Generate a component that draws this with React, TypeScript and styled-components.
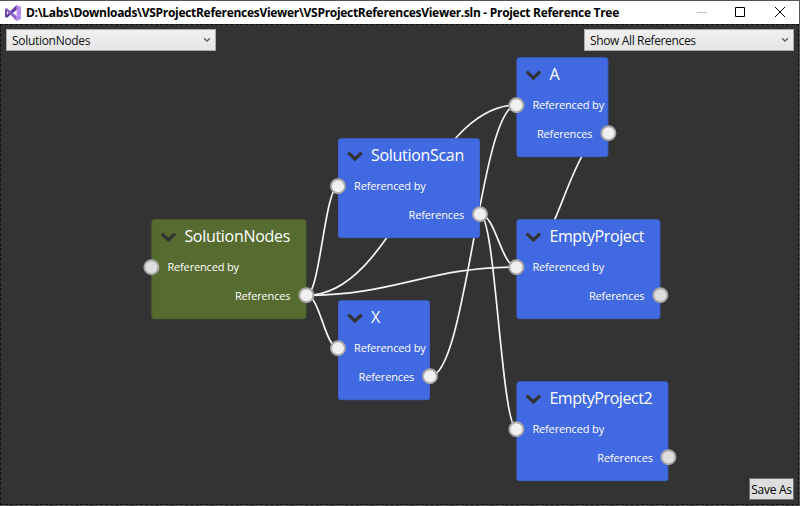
import React from 'react';
import styled, { createGlobalStyle } from 'styled-components';

const Global = createGlobalStyle`
  * { box-sizing: border-box; }
  body { margin: 0; background: #333; font-family: "Open Sans", "Noto Sans", sans-serif; }
`;

const Window = styled.div`
  width: 800px;
  height: 506px;
  display: flex;
  flex-direction: column;
  background: #333;
  border: 1px solid #555;
  border-left: 0;
  overflow: hidden;
`;

const TitleBar = styled.header`
  height: 23px;
  flex: none;
  display: flex;
  align-items: center;
  padding-left: 5px;
  background: #fff;
`;

const Title = styled.h1`
  flex: 1;
  margin: 0 0 0 5px;
  font-size: 12px;
  line-height: 22px;
  font-weight: 700;
  letter-spacing: -0.3px;
  color: #000;
  white-space: nowrap;
`;

const WindowButtons = styled.div`
  display: flex;
  width: 117px;
  height: 23px;
`;

const Client = styled.main`
  position: relative;
  flex: 1;
  display: flex;
  flex-direction: column;
  justify-content: space-between;
  border: 1px dashed #111;
  padding: 4px 4px 4px 5px;
`;

const Toolbar = styled.div`
  display: flex;
  justify-content: space-between;
`;

const Select = styled.button<{ $tracking: number }>`
  width: 210px;
  height: 22px;
  display: flex;
  align-items: center;
  justify-content: space-between;
  padding: 1px 4px 0 5px;
  border: 1px solid #acacac;
  background: linear-gradient(#f0f0f0, #e5e5e5);
  font: 12px/20px "Open Sans", sans-serif;
  letter-spacing: ${(p) => p.$tracking}px;
  color: #111;

  svg {
    margin-bottom: 2px;
  }
`;

const Footer = styled.div`
  position: relative;
  display: flex;
  justify-content: flex-end;
`;

const SaveButton = styled.button`
  width: 45px;
  height: 22px;
  padding: 1px 0 0;
  border: 1px solid #707070;
  background: #ddd;
  font: 12px/19px "Open Sans", sans-serif;
  letter-spacing: -0.3px;
  color: #000;
  white-space: nowrap;
`;

const Canvas = styled.div`
  position: absolute;
  left: -1px;
  top: -25px;
  width: 800px;
  height: 505px;
  pointer-events: none;
`;

const Wires = styled.svg`
  position: absolute;
  inset: 0;
  fill: none;
  stroke: #f5f5f5;
  stroke-width: 1.7;
`;

const NodeCard = styled.section<{ $x: number; $y: number; $w: number; $root?: boolean }>`
  position: absolute;
  left: ${(p) => Math.floor(p.$x)}px;
  top: ${(p) => p.$y}px;
  width: ${(p) => p.$w}px;
  height: 100px;
  transform: translate(${(p) => p.$x - Math.floor(p.$x)}px, 0.2px);
  border-radius: 3px;
  border: 1px solid ${(p) => (p.$root ? '#50662f' : '#3c62cb')};
  background: ${(p) => (p.$root ? '#556b2f' : '#4169e1')};
  color: #fff;
`;

const NodeHeader = styled.div`
  display: flex;
  align-items: center;
  height: 32px;
  padding-left: 8px;
  gap: 8px;

  svg {
    margin-top: 2px;
  }
`;

const NodeTitle = styled.h2<{ $tracking: number }>`
  margin: 0;
  font-size: 16px;
  line-height: 32px;
  font-weight: 400;
  letter-spacing: ${(p) => p.$tracking}px;
  white-space: nowrap;
`;

const PortLabel = styled.div<{ $out?: boolean }>`
  height: 29px;
  padding: 0 15px;
  text-align: ${(p) => (p.$out ? 'right' : 'left')};
  font-size: 11px;
  line-height: 29px;
  letter-spacing: -0.15px;
  white-space: nowrap;
`;

const Port = styled.i<{ $x: number; $y: number; $idle?: boolean }>`
  position: absolute;
  left: ${(p) => p.$x}px;
  top: ${(p) => p.$y}px;
  width: 16px;
  height: 16px;
  border-radius: 50%;
  border: 2px solid #a9a9a9;
  background: ${(p) => (p.$idle ? '#dedede' : '#f0f0f0')};
`;

interface ProjectNode {
  name: string;
  x: number;
  y: number;
  w: number;
  tracking?: number;
  root?: boolean;
  idleIn?: boolean;
  idleOut?: boolean;
}

const nodes: ProjectNode[] = [
  { name: 'SolutionNodes', x: 151.4, y: 219, w: 155, tracking: -0.3, root: true, idleIn: true },
  { name: 'SolutionScan', x: 338, y: 138, w: 142, tracking: -0.3 },
  { name: 'X', x: 338, y: 300, w: 92 },
  { name: 'A', x: 516.4, y: 57, w: 92 },
  { name: 'EmptyProject', x: 516.4, y: 219, w: 144, tracking: -0.4, idleOut: true },
  { name: 'EmptyProject2', x: 516.4, y: 381, w: 152.4, tracking: -0.45, idleOut: true },
];

const links: [number, number][] = [
  [0, 1], [0, 2], [0, 3], [0, 4], [1, 4], [1, 5], [2, 3], [3, 4],
];

function wirePath([from, to]: [number, number]) {
  const a = nodes[from];
  const b = nodes[to];
  const x1 = a.x + a.w;
  const y1 = a.y + 76.3;
  const x2 = b.x + 0.5;
  const y2 = b.y + 48;
  const pull = (x2 - x1) * 0.425;
  return `M${x1} ${y1}C${x1 + pull} ${y1} ${x2 - pull} ${y2} ${x2} ${y2}`;
}

const Arrow = () => (
  <svg width="8" height="6" viewBox="0 0 8 6">
    <path d="M1 1.2 4 4 7 1.2" fill="none" stroke="#606060" strokeWidth="1.3" />
  </svg>
);

const Node = ({ node }: { node: ProjectNode }) => (
  <NodeCard $x={node.x} $y={node.y} $w={node.w} $root={node.root}>
    <NodeHeader>
      <svg width="16" height="12" viewBox="0 0 16 12">
        <path d="M1.3 2.4 8 8.8 14.7 2.4" fill="none" stroke="#333" strokeWidth="3.2" />
      </svg>
      <NodeTitle $tracking={node.tracking ?? 0}>{node.name}</NodeTitle>
    </NodeHeader>
    <PortLabel>Referenced by</PortLabel>
    <PortLabel $out>References</PortLabel>
    <Port $x={-9} $y={39} $idle={node.idleIn} />
    <Port $x={node.w - 9} $y={67} $idle={node.idleOut} />
  </NodeCard>
);

export default function App() {
  return (
    <>
      <Global />
      <Window>
        <TitleBar>
          <svg width="16" height="16" viewBox="0 0 16 16">
            <path d="M0 4.2 2 3.2V12.8L0 11.8z" fill="#6f45ad" />
            <path d="M0 11.8 11.6 0 12 4.6 2 12.8z" fill="#64399f" />
            <path d="M0 4.2 2 3.2 12 11.4 11.6 16z" fill="#8a62c8" />
            <path d="M11.6 0 16 2v12l-4.4 2z" fill="#b48cee" />
          </svg>
          <Title>D:\Labs\Downloads\VSProjectReferencesViewer\VSProjectReferencesViewer.sln - Project Reference Tree</Title>
          <WindowButtons>
            <svg width="117" height="23" viewBox="0 0 117 23" fill="none" stroke="#000">
              <path d="M15 11.5h10" stroke="#bfbfbf" />
              <path d="M53.5 6.5h9v9h-9z" />
              <path d="m93 6 10 10M103 6 93 16" />
            </svg>
          </WindowButtons>
        </TitleBar>
        <Client>
          <Canvas>
            <Wires width="800" height="505">
              {links.map((l) => <path key={l.join('-')} d={wirePath(l)} />)}
            </Wires>
            {nodes.map((n) => <Node key={n.name} node={n} />)}
          </Canvas>
          <Toolbar>
            <Select $tracking={-0.3}>SolutionNodes<Arrow /></Select>
            <Select $tracking={-0.36}>Show All References<Arrow /></Select>
          </Toolbar>
          <Footer><SaveButton>Save As</SaveButton></Footer>
        </Client>
      </Window>
    </>
  );
}
